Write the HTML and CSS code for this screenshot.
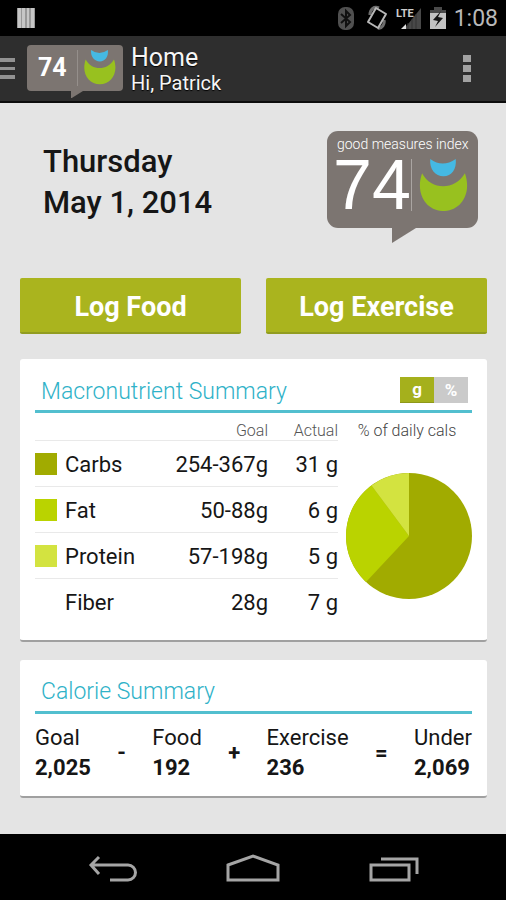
FILE: index.html
```html
<!DOCTYPE html>
<html lang="en">
<head>
<meta charset="utf-8">
<meta name="viewport" content="width=device-width, initial-scale=1">
<title>Home</title>
<link rel="stylesheet" href="styles.css">
</head>
<body>
<div class="status-bar">
  <svg class="status-notice" width="18" height="22" viewBox="0 0 18 22" aria-hidden="true">
    <path fill="#989898" d="M0 1h18v20H0z"/>
    <path fill="#c6c6c6" d="M1 1h3v20H1zM5 1h3v20H5zM10 1h2v20h-2zM14 1h3v20h-3z"/>
  </svg>
  <div class="status-icons">
    <svg width="16" height="24" viewBox="0 0 16 24" aria-hidden="true">
      <rect width="16" height="23" y="1" rx="7" fill="#505050"/>
      <path d="M3 8l9 8-4 4V5l4 4-9 8" fill="none" stroke="#111" stroke-width="2"/>
    </svg>
    <svg width="22" height="26" viewBox="0 0 22 26" aria-hidden="true">
      <path d="M4 10C4 4 8 1 13 3M18 15c1 4-2 9-6 8" fill="none" stroke="#6d6d6d" stroke-width="3"/>
      <path d="M10 3l10 6-8 14-10-6z" fill="#000" stroke="#b8b8b8" stroke-width="2" stroke-linejoin="round"/>
    </svg>
    <svg width="26" height="24" viewBox="0 0 26 24" aria-hidden="true">
      <path d="M8 23L25 2v21z" fill="#484848"/>
      <path d="M12 17v6M16 13v10M20 8v15" stroke="#333"/>
      <path d="M5 23l5-5v5z" fill="#e2e2e2"/>
      <text x="0" y="11" class="lte">LTE</text>
    </svg>
    <svg width="16" height="24" viewBox="0 0 16 24" aria-hidden="true">
      <path d="M0 4h4V1h8v3h4v5H0z" fill="#4a4a4a"/>
      <path d="M0 7h16v16H0z" fill="#c2c2c2"/>
      <path d="M11 5L3 14l5 1-3 6 8-9-5-1z" fill="#151515"/>
    </svg>
    <span class="clock">1:08</span>
  </div>
</div>

<header class="action-bar">
  <button class="icon-button" type="button" aria-label="Open menu">
    <svg width="15" height="22" viewBox="0 0 15 22"><path fill="#929292" d="M0 0h15v4H0zM0 9h15v3H0zM0 17h15v4H0z"/></svg>
  </button>
  <div class="bubble bubble-small">
    <div class="bubble-row">
      <span class="score">74</span>
      <svg class="smile" viewBox="0 0 49 51" aria-hidden="true">
        <path fill="#45b9e3" d="M12 0q12 9 25 0c1 10-4 17-12 17S11 10 12 0z"/>
        <path fill="#98c11f" d="M4 14c9 17 32 17 42 0 7 20-4 37-21 37S-3 34 4 14z"/>
      </svg>
    </div>
    <svg class="tail" viewBox="0 0 24 15" aria-hidden="true"><path d="M0 0h24L0 15z"/></svg>
  </div>
  <div class="heading">
    <h1>Home</h1>
    <p>Hi, Patrick</p>
  </div>
  <button class="icon-button overflow" type="button" aria-label="More options">
    <svg width="9" height="30" viewBox="0 0 9 30"><path fill="#a2a2a2" d="M0 1h8v7H0zM0 11h8v7H0zM0 21h8v7H0z"/></svg>
  </button>
</header>

<main>
  <section class="today">
    <h2>Thursday<br>May 1, 2014</h2>
    <div class="bubble bubble-large">
      <span class="bubble-caption">good measures index</span>
      <div class="bubble-row">
        <span class="score">74</span>
        <svg class="smile" viewBox="0 0 49 51" aria-hidden="true">
          <path fill="#45b9e3" d="M12 0q12 9 25 0c1 10-4 17-12 17S11 10 12 0z"/>
          <path fill="#98c11f" d="M4 14c9 17 32 17 42 0 7 20-4 37-21 37S-3 34 4 14z"/>
        </svg>
      </div>
      <svg class="tail" viewBox="0 0 24 15" aria-hidden="true"><path d="M0 0h24L0 15z"/></svg>
    </div>
  </section>

  <div class="actions">
    <button type="button">Log Food</button>
    <button type="button">Log Exercise</button>
  </div>

  <section class="card">
    <div class="card-head">
      <h3>Macronutrient Summary</h3>
      <div class="toggle">
        <button class="selected" type="button" aria-pressed="true">g</button>
        <button type="button" aria-pressed="false">%</button>
      </div>
    </div>
    <div class="macros">
      <table>
        <thead>
          <tr><th></th><th>Goal</th><th class="actual">Actual</th></tr>
        </thead>
        <tbody>
          <tr><th scope="row"><span class="swatch carbs"></span>Carbs</th><td>254-367g</td><td>31 g</td></tr>
          <tr><th scope="row"><span class="swatch fat"></span>Fat</th><td>50-88g</td><td>6 g</td></tr>
          <tr><th scope="row"><span class="swatch protein"></span>Protein</th><td>57-198g</td><td>5 g</td></tr>
          <tr><th scope="row"><span class="swatch"></span>Fiber</th><td>28g</td><td>7 g</td></tr>
        </tbody>
      </table>
      <figure>
        <figcaption>% of daily cals</figcaption>
        <svg viewBox="0 0 126 126" aria-hidden="true">
          <circle cx="63" cy="63" r="63" fill="#a1ab00"/>
          <path fill="#bad300" d="M63 63L20 109A63 63 0 0 1 25.500 12.400z"/>
          <path fill="#d3e340" d="M63 63L25.500 12.400A63 63 0 0 1 63 0z"/>
        </svg>
      </figure>
    </div>
  </section>

  <section class="card">
    <div class="card-head"><h3>Calorie Summary</h3></div>
    <div class="equation">
      <div class="term"><span>Goal</span><b>2,025</b></div>
      <b>-</b>
      <div class="term"><span>Food</span><b>192</b></div>
      <b>+</b>
      <div class="term"><span>Exercise</span><b>236</b></div>
      <b>=</b>
      <div class="term"><span>Under</span><b>2,069</b></div>
    </div>
  </section>
</main>

<nav class="nav-bar">
  <button type="button" aria-label="Back">
    <svg width="50" height="30" viewBox="0 0 50 30"><path d="M12 3L4 11l8 9M4 11h37a7 7 0 0 1 0 15H23" fill="none" stroke="#a5a5a5" stroke-width="3"/></svg>
  </button>
  <button type="button" aria-label="Home">
    <svg width="54" height="30" viewBox="0 0 54 30"><path d="M2 11L27 2l25 9v15H2z" fill="none" stroke="#a5a5a5" stroke-width="3"/></svg>
  </button>
  <button type="button" aria-label="Recent apps">
    <svg width="50" height="30" viewBox="0 0 50 30"><path d="M2 11h38v15H2zM12 5h36v15" fill="none" stroke="#a5a5a5" stroke-width="3"/></svg>
  </button>
</nav>
</body>
</html>
```
FILE: styles.css
```css
* {
  box-sizing: border-box;
}

body {
  display: flex;
  flex-direction: column;
  min-height: 100vh;
  margin: 0;
  background: #e4e4e4;
  color: #161616;
  font-family: Roboto, "Liberation Sans", sans-serif;
}

h1, h2, h3, p, figure {
  margin: 0;
  font-weight: 400;
}

button {
  padding: 0;
  border: 0;
  background: none;
  font-family: inherit;
}

svg {
  display: block;
}

.status-bar {
  display: flex;
  align-items: center;
  justify-content: space-between;
  height: 36px;
  padding: 0 8px 0 17px;
  background: #000;
}

.status-icons {
  display: flex;
  align-items: center;
  gap: 8px;
}

.status-icons svg:first-child {
  margin-right: 4px;
}

.lte {
  fill: #ccc;
  font-size: 11px;
  font-weight: 700;
}

.clock {
  padding-top: 2px;
  color: #b8b8b8;
  font-size: 23px;
  line-height: 34px;
}

.action-bar {
  display: flex;
  align-items: center;
  height: 67px;
  padding-right: 34px;
  border-bottom: 2px solid #0c0c0c;
  background: #2e2e2e;
}

.overflow {
  margin-left: auto;
}

.heading {
  padding-top: 3px;
  margin-left: 8px;
  color: #f6f6f6;
  text-shadow: 0 1px 1px #000;
}

.heading h1 {
  font-size: 25px;
  line-height: 26px;
}

.heading p {
  font-size: 20px;
  line-height: 24px;
}

.bubble {
  position: relative;
  background: #7c7571;
  color: #fff;
}

.bubble-row {
  display: flex;
  align-items: center;
}

.tail {
  position: absolute;
  top: 100%;
  fill: #7c7571;
}

.bubble-small {
  width: 96px;
  margin: 0 0 2px 12px;
  padding: 5px 7px 5px 11px;
  border-radius: 4px;
}

.bubble-small .score {
  width: 40px;
  border-right: 1px solid #958f8b;
  font-size: 25px;
  font-weight: 700;
  line-height: 36px;
}

.bubble-small .smile {
  width: 33px;
  margin-left: 5px;
}

.bubble-small .tail {
  left: 44px;
  width: 12px;
}

.today {
  display: flex;
  justify-content: space-between;
  padding: 0 9px 0 23px;
}

.today h2 {
  padding-top: 10px;
  font-size: 31px;
  font-weight: 500;
  line-height: 41px;
}

.bubble-large {
  width: 151px;
  height: 97px;
  padding: 4px 10px 0 6px;
  border-radius: 11px;
}

.bubble-caption {
  display: block;
  padding-left: 4px;
  font-size: 14px;
  font-weight: 300;
  line-height: 18px;
  white-space: nowrap;
}

.bubble-large .bubble-row {
  padding-top: 6px;
}

.bubble-large .score {
  width: 80px;
  border-right: 1px solid #aaa5a2;
  font-family: "Liberation Sans", sans-serif;
  font-size: 70px;
  line-height: 52px;
}

.bubble-large .smile {
  flex: none;
  width: 50px;
  margin-left: 6px;
}

.bubble-large .tail {
  left: 65px;
  width: 24px;
}

main {
  flex: 1;
  padding: 28px 19px 36px 20px;
}

.actions {
  display: grid;
  grid-template-columns: 1fr 1fr;
  gap: 25px;
  margin: 50px 0 25px;
}

.actions button {
  height: 56px;
  padding-top: 3px;
  border-bottom: 2px solid #919c20;
  border-radius: 2px;
  background: #aab41e;
  color: #fff;
  font-size: 27px;
  font-weight: 700;
}

.card {
  padding: 0 15px 13px;
  border-bottom: 2px solid #a0a0a0;
  border-radius: 3px;
  background: #fff;
}

.card + .card {
  margin-top: 18px;
}

.card-head {
  display: flex;
  align-items: center;
  justify-content: space-between;
  height: 54px;
  padding: 10px 4px 0 6px;
  border-bottom: 3px solid #52bfcf;
}

.card-head h3 {
  padding-top: 3px;
  color: #2fb2c8;
  font-size: 23px;
  font-weight: 300;
}

.toggle {
  display: flex;
}

.toggle button {
  width: 34px;
  height: 26px;
  background: #cacaca;
  color: #fff;
  font-size: 17px;
  font-weight: 700;
}

.toggle .selected {
  border-bottom: 1px solid #8e981a;
  background: #a5b01c;
}

.macros {
  display: flex;
  gap: 8px;
  padding-bottom: 2px;
}

.macros table {
  flex: 1;
  border-collapse: collapse;
}

.macros th,
.macros td {
  height: 46px;
  padding: 2px 0 0;
  border-top: 1px solid #e9e9e9;
  font-size: 22px;
  font-weight: 400;
  line-height: 26px;
  text-align: right;
}

.macros thead th {
  height: 27px;
  padding-top: 9px;
  border: 0;
  color: #555;
  font-size: 16px;
  font-weight: 300;
  line-height: 18px;
}

.macros .actual {
  width: 70px;
}

.macros tbody th {
  text-align: left;
}

.swatch {
  display: inline-block;
  width: 22px;
  height: 22px;
  margin-right: 8px;
  vertical-align: -3px;
}

.carbs {
  background: #a1ab00;
}

.fat {
  background: #bad300;
}

.protein {
  background: #d3e340;
}

figure {
  width: 126px;
}

figcaption {
  margin-bottom: 33px;
  padding: 9px 4px 0 0;
  color: #444;
  font-size: 16px;
  font-weight: 300;
  line-height: 18px;
  text-align: center;
  white-space: nowrap;
}

.equation {
  display: flex;
  align-items: center;
  justify-content: space-between;
  padding-top: 9px;
  font-size: 22px;
}

.term {
  display: flex;
  flex-direction: column;
  line-height: 30px;
}

.nav-bar {
  display: flex;
  align-items: center;
  justify-content: space-around;
  height: 66px;
  padding: 4px 42px 0;
  background: #000;
}
```
